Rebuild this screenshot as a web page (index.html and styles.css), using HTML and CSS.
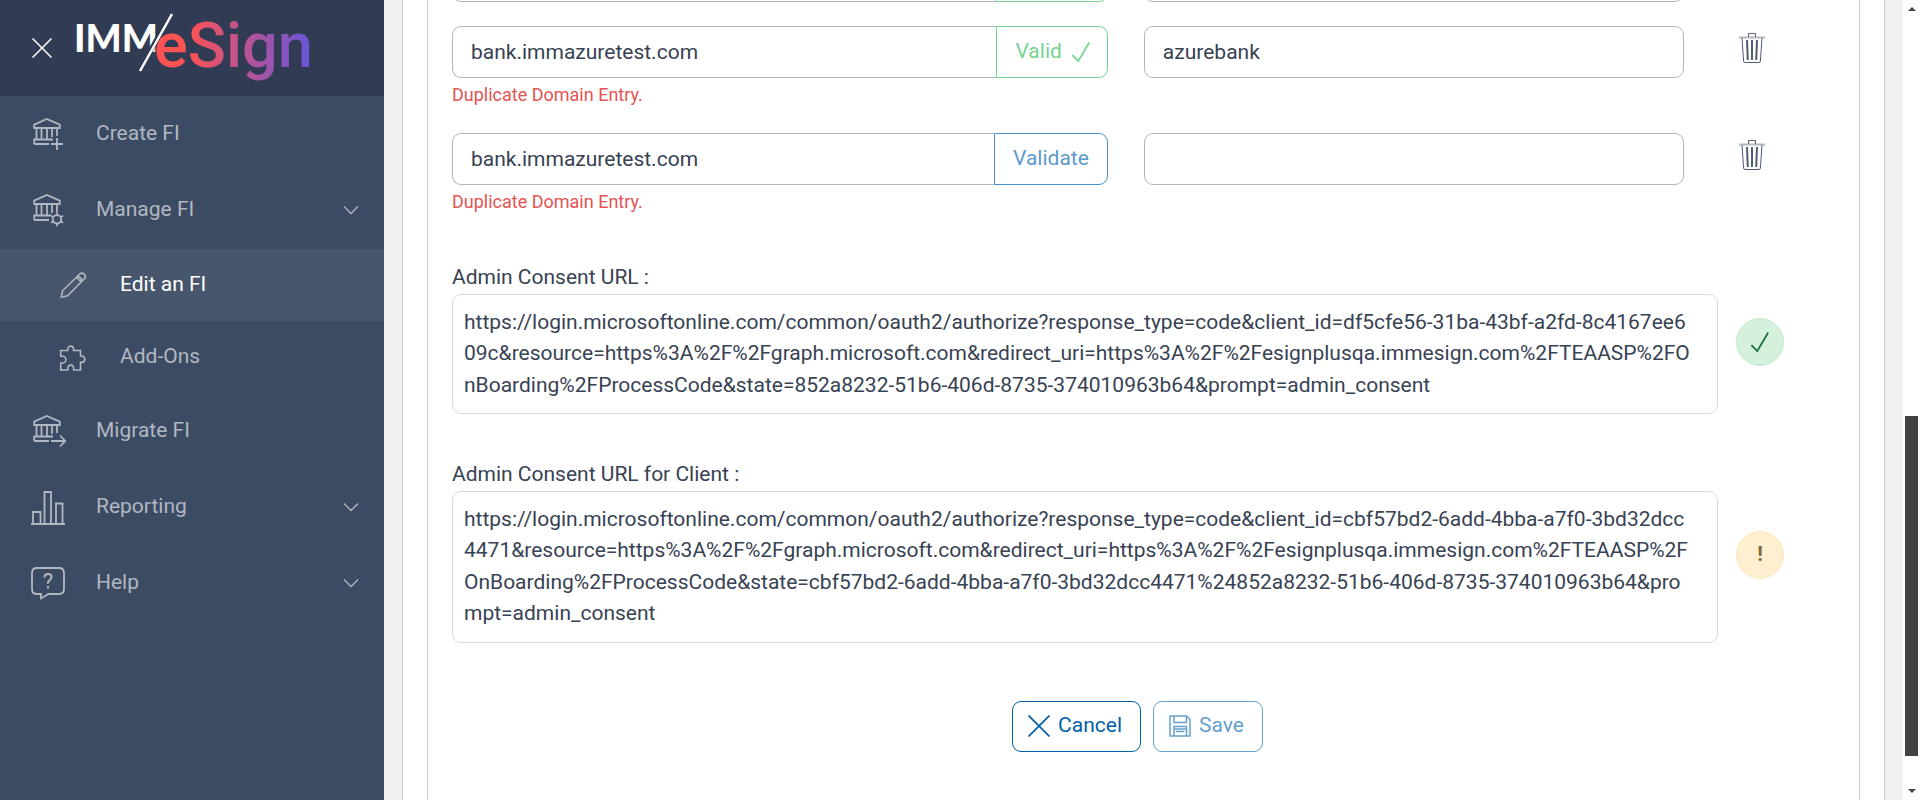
FILE: index.html
```html
<!DOCTYPE html>
<html lang="en">
<head>
    <meta charset="UTF-8">
    <meta name="viewport" content="width=device-width, initial-scale=1.0">
    <title>IMM eSign - Edit an FI</title>
    <link rel="stylesheet" href="styles.css">
</head>
<body>
    <svg class="sprite" aria-hidden="true">
        <symbol id="icon-bank" viewBox="0 0 36 36">
            <path d="M4.2 12V8.6L16.8 3 29.8 8.6V12ZM6.5 12v11.5M11.5 12v11.5M17 12v11.5M22 12v9M27 12v8M4.2 28v-4.5H23M4.2 28H19"/>
        </symbol>
        <symbol id="icon-check" viewBox="0 0 22 24">
            <path d="M1.5 15.5 8 22 20 1.5"/>
        </symbol>
        <symbol id="icon-chevron" viewBox="0 0 16 10">
            <path d="M1 1.5l7 7 7-7"/>
        </symbol>
        <symbol id="icon-trash" viewBox="0 0 26 30">
            <path d="M0 4.5h26" stroke="#b4b8bf" stroke-width="2"/>
            <path d="M9.5 4V.5h7V4M3 5l1.6 23q.2 1.500 1.500 1.500h13.800q1.300 0 1.500-1.500L23 5"/>
            <path d="M8 7l.8 20M13 7v20M18 7l-.8 20" stroke-width="2"/>
        </symbol>
    </svg>

    <div class="layout">
        <aside class="sidebar">
            <div class="sidebar-header">
                <button class="close-btn" type="button" aria-label="Close menu">
                    <svg viewBox="0 0 20 20"><path d="M.5.5l19 19M19.500.5l-19 19"/></svg>
                </button>
                <svg class="logo" viewBox="0 0 240 84" role="img" aria-label="IMM eSign">
                    <defs>
                        <linearGradient id="logo-gradient" gradientUnits="userSpaceOnUse" x1="84" y1="0" x2="234" y2="0">
                            <stop offset="0" stop-color="#ff5253"/>
                            <stop offset=".2" stop-color="#ff5253"/>
                            <stop offset="1" stop-color="#6c55d8"/>
                        </linearGradient>
                    </defs>
                    <text class="logo-imm" x="0" y="46">IMM</text>
                    <text class="logo-esign" x="80" y="61">eSign</text>
                    <path class="logo-gap" d="M97 8L65 65"/>
                    <path class="logo-slash" d="M98 8L66 65"/>
                </svg>
            </div>
            <nav class="nav">
                <a class="nav-item" href="#">
                    <svg class="nav-icon" viewBox="0 0 36 36">
                        <use href="#icon-bank"/>
                        <path d="M21 28h12M27 22v12"/>
                    </svg>
                    Create FI
                </a>
                <a class="nav-item" href="#">
                    <svg class="nav-icon" viewBox="0 0 36 36">
                        <use href="#icon-bank"/>
                        <circle class="icon-back" cx="27" cy="27.300" r="7"/>
                        <circle cx="27" cy="27.300" r="4.200"/>
                        <path d="M27 20.300v3M27 31.300v3M20.900 23.800l2.600 1.500M30.500 29.300l2.600 1.500M20.900 30.800l2.600-1.500M30.500 25.300l2.600-1.500"/>
                    </svg>
                    Manage FI
                    <svg class="chevron"><use href="#icon-chevron"/></svg>
                </a>
                <div class="sub-nav">
                    <a class="nav-item active" href="#">
                        <svg class="nav-icon" viewBox="0 0 30 30">
                            <path d="M3.300 27.300l1.200-6.500L21.500 4.300a3.300 3.300 0 0 1 4.700 4.700L9.500 25.800ZM18.500 7.300l4.700 4.700M19.500 6.300q3.600 1 4.700 4.700"/>
                        </svg>
                        Edit an FI
                    </a>
                    <a class="nav-item" href="#">
                        <svg class="nav-icon" viewBox="0 0 30 30">
                            <path d="M2.700 8.500H9.800V7a2.900 2.900 0 0 1 5.800 0V8.500H22.500V14H23.500a3.200 3.200 0 0 1 0 6.400H22.500V28H15.600V26a2.900 2.900 0 0 0-5.800 0V28H2.700V21H4.500a3.400 3.400 0 0 0 0-6.800H2.700Z"/>
                        </svg>
                        Add-Ons
                    </a>
                </div>
                <a class="nav-item" href="#">
                    <svg class="nav-icon" viewBox="0 0 36 36">
                        <use href="#icon-bank"/>
                        <path d="M21 28h14M30 22.500l5.300 5.500-5.300 5.500"/>
                    </svg>
                    Migrate FI
                </a>
                <a class="nav-item" href="#">
                    <svg class="nav-icon" viewBox="0 0 36 36">
                        <path d="M1 35h34M3 35V23h7.500v12M14.500 35V3h6.500v32M26 35V14.500h6.500V35"/>
                    </svg>
                    Reporting
                    <svg class="chevron"><use href="#icon-chevron"/></svg>
                </a>
                <a class="nav-item" href="#">
                    <svg class="nav-icon" viewBox="0 0 36 36">
                        <path d="M7 3h22q5 0 5 5v16q0 5-5 5H18.500l-7.500 4.500V29H7q-5 0-5-5V8q0-5 5-5Z"/>
                        <path d="M14.500 12.500q0-3.500 3.500-3.500t3.500 3q0 2-2 3.300t-1.500 3.500M18 21v2.500" stroke-width="2"/>
                    </svg>
                    Help
                    <svg class="chevron"><use href="#icon-chevron"/></svg>
                </a>
            </nav>
        </aside>

        <main class="content">
            <div class="card">
                <form class="fi-form">
                    <div class="domain-row">
                        <div class="input-group">
                            <input class="field" type="text" aria-label="Domain 1">
                            <button class="group-btn valid" type="button">Valid <svg><use href="#icon-check"/></svg></button>
                        </div>
                        <input class="field" type="text" aria-label="Bank name 1">
                    </div>

                    <div class="domain-row">
                        <div class="input-group">
                            <input class="field" type="text" value="bank.immazuretest.com" aria-label="Domain 2">
                            <button class="group-btn valid" type="button">Valid <svg><use href="#icon-check"/></svg></button>
                        </div>
                        <input class="field" type="text" value="azurebank" aria-label="Bank name 2">
                        <button class="trash-btn" type="button" aria-label="Delete domain 2"><svg><use href="#icon-trash"/></svg></button>
                        <div class="error">Duplicate Domain Entry.</div>
                    </div>

                    <div class="domain-row">
                        <div class="input-group">
                            <input class="field" type="text" value="bank.immazuretest.com" aria-label="Domain 3">
                            <button class="group-btn" type="button">Validate</button>
                        </div>
                        <input class="field" type="text" aria-label="Bank name 3">
                        <button class="trash-btn" type="button" aria-label="Delete domain 3"><svg><use href="#icon-trash"/></svg></button>
                        <div class="error">Duplicate Domain Entry.</div>
                    </div>

                    <section class="consent">
                        <div class="consent-label">Admin Consent URL :</div>
                        <div class="consent-row">
                            <div class="url-box">https://login.microsoftonline.com/common/oauth2/authorize?response_type=code&amp;client_id=df5cfe56-31ba-43bf-a2fd-8c4167ee6<br>09c&amp;resource=https%3A%2F%2Fgraph.microsoft.com&amp;redirect_uri=https%3A%2F%2Fesignplusqa.immesign.com%2FTEAASP%2FO<br>nBoarding%2FProcessCode&amp;state=852a8232-51b6-406d-8735-374010963b64&amp;prompt=admin_consent</div>
                            <span class="status success"><svg><use href="#icon-check"/></svg></span>
                        </div>
                    </section>

                    <section class="consent">
                        <div class="consent-label">Admin Consent URL for Client :</div>
                        <div class="consent-row">
                            <div class="url-box">https://login.microsoftonline.com/common/oauth2/authorize?response_type=code&amp;client_id=cbf57bd2-6add-4bba-a7f0-3bd32dcc<br>4471&amp;resource=https%3A%2F%2Fgraph.microsoft.com&amp;redirect_uri=https%3A%2F%2Fesignplusqa.immesign.com%2FTEAASP%2F<br>OnBoarding%2FProcessCode&amp;state=cbf57bd2-6add-4bba-a7f0-3bd32dcc4471%24852a8232-51b6-406d-8735-374010963b64&amp;pro<br>mpt=admin_consent</div>
                            <span class="status warning">!</span>
                        </div>
                    </section>

                    <div class="actions">
                        <button class="btn" type="button">
                            <svg viewBox="0 0 22 22"><path d="M.5.5l21 21M21.500.5l-21 21"/></svg>
                            Cancel
                        </button>
                        <button class="btn btn-save" type="button">
                            <svg viewBox="0 0 22 22"><path d="M1 1h16.500L21 4.500V21H1ZM5 1v6.500h12.500V1M5 21v-9.500h12.500V21M5 14h12.500M7 16.500h8.500"/></svg>
                            Save
                        </button>
                    </div>
                </form>
            </div>
        </main>

        <div class="scrollbar" aria-hidden="true">
            <svg viewBox="0 0 8 4"><path d="M4 0l4 4H0Z"/></svg>
            <span class="thumb"></span>
            <svg viewBox="0 0 8 4"><path d="M0 0h8L4 4Z"/></svg>
        </div>
    </div>
</body>
</html>
```
FILE: styles.css
```css
* {
    box-sizing: border-box;
}
body {
    margin: 0;
    font-family: Roboto, "Liberation Sans", sans-serif;
    font-size: 21px;
    line-height: 1.5;
    color: #374253;
    background-color: #fff;
}
input, button {
    font: inherit;
    color: inherit;
}
button {
    cursor: pointer;
}
svg {
    fill: none;
    stroke: currentColor;
    flex-shrink: 0;
}
.sprite {
    display: none;
}
.layout {
    display: flex;
    height: 100vh;
    overflow: hidden;
}

/* sidebar */
.sidebar {
    width: 384px;
    flex-shrink: 0;
    background-color: #3c4b64;
    color: #b1b7c1;
}
.sidebar-header {
    display: flex;
    align-items: center;
    height: 96px;
    padding-left: 32px;
    gap: 22px;
    background-color: #313c54;
}
.close-btn {
    display: flex;
    padding: 0;
    border: none;
    background: none;
    color: #fff;
}
.close-btn svg {
    width: 20px;
    height: 20px;
    stroke-width: 1.5;
}
.logo {
    width: 240px;
    height: 84px;
    overflow: visible;
}
.logo text {
    stroke: none;
}
.logo-imm {
    font-family: Lato, sans-serif;
    font-size: 38px;
    font-weight: 900;
    fill: #fff;
}
.logo-esign {
    font-size: 63px;
    font-weight: 500;
    fill: url(#logo-gradient);
}
.logo-gap {
    stroke: #313c54;
    stroke-width: 5;
}
.logo-slash {
    stroke: #fff;
    stroke-width: 2.5;
}
.nav-item {
    display: flex;
    align-items: center;
    height: 76px;
    padding: 0 25px 0 30px;
    gap: 30px;
    color: #b1b7c1;
    text-decoration: none;
}
.nav-icon {
    width: 36px;
    height: 36px;
    stroke-width: 1.8;
}
.icon-back {
    fill: #3c4b64;
    stroke: none;
}
.chevron {
    width: 16px;
    height: 10px;
    margin-left: auto;
    stroke-width: 1.3;
}
.sub-nav {
    padding-top: 1px;
}
.sub-nav .nav-item {
    height: 72px;
    padding-left: 58px;
    gap: 32px;
}
.sub-nav .nav-icon {
    width: 30px;
    height: 30px;
    stroke-width: 1.6;
}
.nav-item.active {
    background-color: #47566c;
    color: #fff;
}
.nav-item.active .nav-icon {
    color: #b1b7c1;
}

/* content */
.content {
    flex: 1;
    min-width: 0;
    padding: 0 18px;
    background-color: #f0f0f0;
}
.card {
    display: flow-root;
    height: 100%;
    padding: 0 24px;
    border: solid #c8cacd;
    border-width: 0 1px;
    background-color: #fff;
}
/* the form is scrolled down, its first visible row is cut by the top edge */
.fi-form {
    margin-top: -50px;
    padding: 0 24px 96px;
    border: solid #c8cacd;
    border-width: 0 1px;
}
.domain-row {
    display: grid;
    grid-template-columns: 17fr 14fr 115px;
    column-gap: 36px;
    margin-bottom: 24px;
}
.input-group {
    display: flex;
    min-width: 0;
}
.field {
    width: 100%;
    min-width: 0;
    height: 52px;
    padding: 0 18px;
    border: 1px solid #b1b7c1;
    border-radius: 9px;
    background-color: #fff;
}
.input-group .field {
    flex: 1;
    border-right: none;
    border-radius: 9px 0 0 9px;
}
.group-btn {
    display: flex;
    align-items: center;
    gap: 9px;
    padding: 0 18px;
    border: 1px solid #4c90c6;
    border-radius: 0 9px 9px 0;
    background-color: #fff;
    color: #5d9acb;
}
.group-btn.valid {
    padding-right: 16px;
    border-color: #77d392;
    color: #77d392;
}
.group-btn svg {
    width: 20px;
    height: 22px;
    stroke-width: 2;
}
.trash-btn {
    display: flex;
    justify-self: start;
    align-self: start;
    margin-left: 12px;
    padding: 7px;
    border: none;
    background: none;
    color: #4f5d73;
}
.trash-btn svg {
    width: 26px;
    height: 30px;
}
.error {
    grid-column: 1 / -1;
    padding-top: 2px;
    font-size: 18px;
    line-height: 29px;
    color: #e55353;
}
.consent {
    padding-top: 22px;
    margin-bottom: 23px;
}
.consent-row {
    display: flex;
    align-items: center;
    gap: 18px;
    padding-right: 51px;
}
.url-box {
    flex: 1;
    min-width: 0;
    padding: 12px 11px;
    border: 1px solid #d8dbe0;
    border-radius: 9px;
    word-break: break-all;
}
.status {
    display: flex;
    align-items: center;
    justify-content: center;
    width: 48px;
    height: 48px;
    margin-bottom: 24px;
    border: 1px solid;
    border-radius: 50%;
}
.status svg {
    width: 20px;
    height: 22px;
    stroke-width: 2;
}
.status.success {
    background-color: #d5f1de;
    border-color: #c4ebd1;
    color: #18703b;
}
.status.warning {
    background-color: #feefd0;
    border-color: #fde9bd;
    color: #816833;
    font-weight: 700;
}
.actions {
    display: flex;
    justify-content: center;
    padding-top: 35px;
}
.btn {
    display: flex;
    align-items: center;
    gap: 8px;
    height: 51px;
    margin-right: 12px;
    padding: 0 18px 0 15px;
    border: 1px solid #0061a8;
    border-radius: 9px;
    background-color: #fff;
    color: #0061a8;
}
.btn svg {
    width: 22px;
    height: 22px;
    stroke-width: 1.7;
}
.btn-save {
    border-color: #66a0cb;
    color: #66a0cb;
}
.btn-save svg {
    stroke-width: 1.5;
}

/* scrollbar */
.scrollbar {
    position: relative;
    display: flex;
    flex-direction: column;
    justify-content: space-between;
    align-items: center;
    width: 17px;
    padding: 7px 0;
    background-color: #fff;
}
.scrollbar svg {
    width: 8px;
    height: 4px;
    fill: #424242;
    stroke: none;
}
.thumb {
    position: absolute;
    top: 52%;
    left: 2px;
    width: 13px;
    height: 42.5%;
    background-color: #424242;
}
```
